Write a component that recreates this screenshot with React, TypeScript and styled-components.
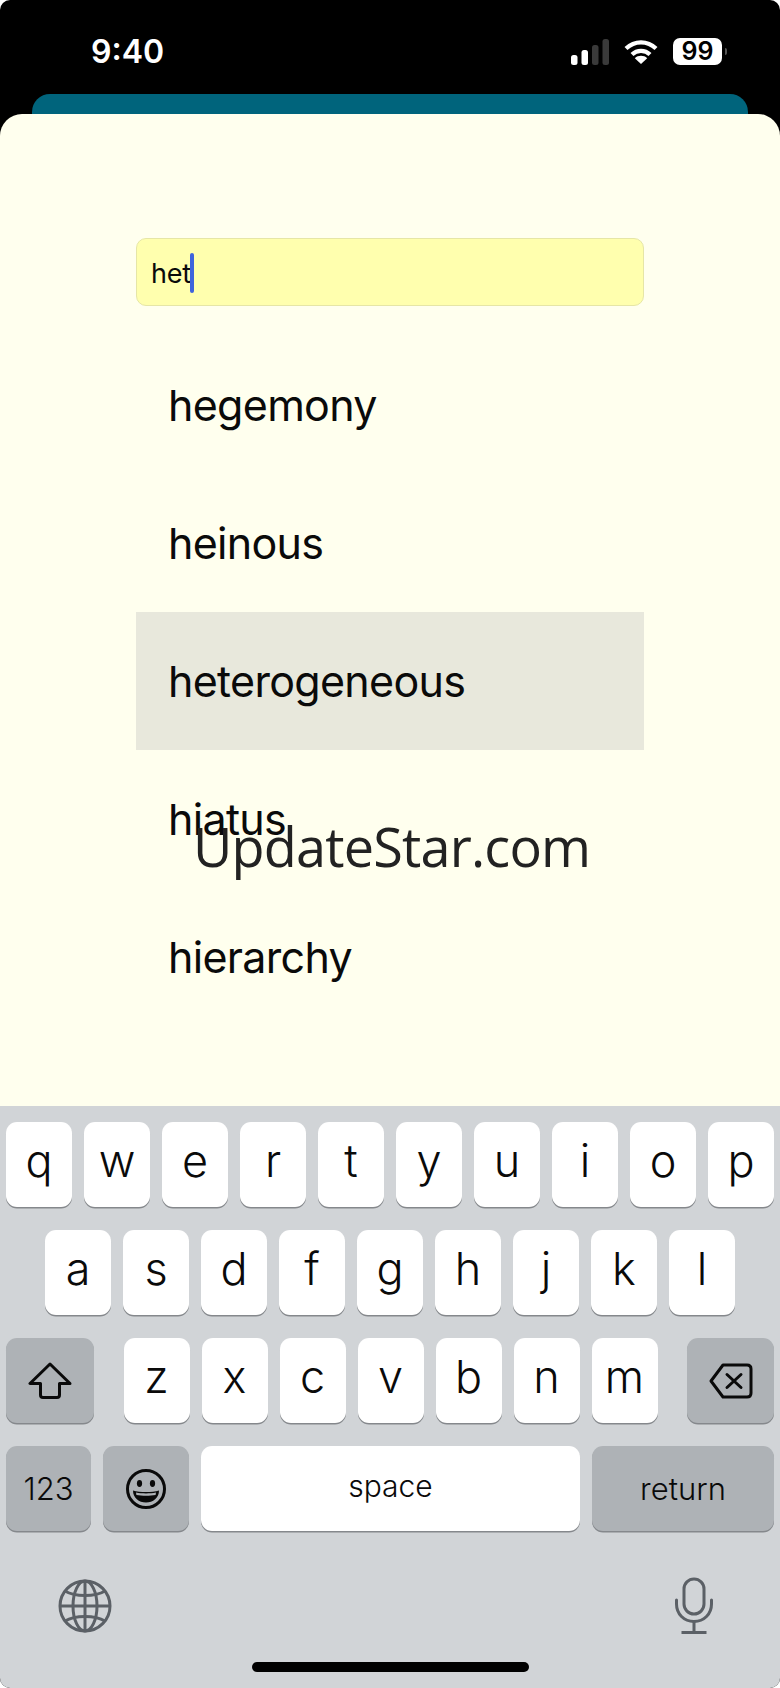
import React from 'react';
import styled, { createGlobalStyle } from 'styled-components';

const ROW_ONE = ['q', 'w', 'e', 'r', 't', 'y', 'u', 'i', 'o', 'p'];
const ROW_TWO = ['a', 's', 'd', 'f', 'g', 'h', 'j', 'k', 'l'];
const ROW_THREE = ['z', 'x', 'c', 'v', 'b', 'n', 'm'];
const WORDS = ['hegemony', 'heinous', 'heterogeneous', 'hiatus', 'hierarchy'];

const GlobalStyle = createGlobalStyle`
  html, body {
    margin: 0;
    padding: 0;
    background: #ffffff;
  }
  * {
    box-sizing: border-box;
  }
`;

const SignalIcon = () => (
  <svg width="38" height="26" viewBox="0 0 38 26">
    <rect x="0" y="16" width="6.5" height="10" rx="2.5" fill="#fff" />
    <rect x="10.5" y="11" width="6.5" height="15" rx="2.5" fill="#fff" />
    <rect x="21" y="6" width="6.5" height="20" rx="2.5" fill="#3a3a3a" />
    <rect x="31.5" y="0" width="6.5" height="26" rx="2.5" fill="#3a3a3a" />
  </svg>
);

const WifiIcon = () => (
  <svg width="34" height="25" viewBox="0 0 34 25" fill="none" stroke="#fff" strokeWidth="4.2">
    <path d="M2 9.5C10.5 1.2 23.5 1.2 32 9.5" />
    <path d="M8 15.5C13 10.6 21 10.6 26 15.5" />
    <path d="M17 25L10.8 19.2C14.2 16 19.8 16 23.2 19.2Z" fill="#fff" stroke="none" />
  </svg>
);

const ShiftIcon = () => (
  <svg width="44" height="38" viewBox="0 0 44 38" fill="none" stroke="#0a0a0a" strokeWidth="3" strokeLinejoin="round">
    <path d="M22 2L2 21.5H12.5V33C12.5 34.6 13.4 35.5 15 35.5H29C30.6 35.5 31.5 34.6 31.5 33V21.5H42Z" />
  </svg>
);

const DeleteIcon = () => (
  <svg width="44" height="36" viewBox="0 0 44 36" fill="none" stroke="#0a0a0a" strokeWidth="3" strokeLinejoin="round" strokeLinecap="round">
    <path d="M14 2H38C40.6 2 42 3.4 42 6V30C42 32.6 40.6 34 38 34H14L2 18Z" />
    <path d="M18 11.5L32 24.5M32 11.5L18 24.5" />
  </svg>
);

const EmojiIcon = () => (
  <svg width="40" height="40" viewBox="0 0 40 40" fill="none">
    <circle cx="20" cy="20" r="18.5" stroke="#0a0a0a" strokeWidth="3" />
    <ellipse cx="13.5" cy="14.5" rx="2.6" ry="3.4" fill="#0a0a0a" />
    <ellipse cx="26.5" cy="14.5" rx="2.6" ry="3.4" fill="#0a0a0a" />
    <path d="M7 21.5C14 23.5 26 23.5 33 21.5C33 29 27 33.5 20 33.5C13 33.5 7 29 7 21.5Z" fill="#0a0a0a" />
    <path d="M10 23.6C16 24.8 24 24.8 30 23.6L29.6 26C24 27 16 27 10.4 26Z" fill="#aeb2b6" />
  </svg>
);

const GlobeIcon = () => (
  <svg width="54" height="54" viewBox="0 0 54 54" fill="none" stroke="#5b6066" strokeWidth="3">
    <circle cx="27" cy="27" r="25" />
    <ellipse cx="27" cy="27" rx="12" ry="25" />
    <path d="M27 2V52M2 27H52" />
    <path d="M7 12C17 18 37 18 47 12M7 42C17 36 37 36 47 42" />
  </svg>
);

const MicIcon = () => (
  <svg width="38" height="58" viewBox="0 0 38 58" fill="none" stroke="#5b6066" strokeWidth="3" strokeLinecap="round">
    <rect x="9" y="2" width="20" height="35" rx="10" />
    <path d="M1.5 23V27C1.5 37 9 44.5 19 44.5C29 44.5 36.5 37 36.5 27V23" />
    <path d="M19 44.5V55.5M6.5 55.5H31.5" strokeLinecap="butt" />
  </svg>
);

const App: React.FC = () => {
  return (
    <S.Screen>
      <GlobalStyle />
      <S.StatusBar>
        <S.Time>9:40</S.Time>
        <S.StatusIcons>
          <SignalIcon />
          <WifiIcon />
          <S.Battery>
            <S.BatteryLevel>99</S.BatteryLevel>
            <S.BatteryNub />
          </S.Battery>
        </S.StatusIcons>
      </S.StatusBar>
      <S.PeekCard />
      <S.Sheet>
        <S.Form>
          <S.SearchField>
            <span>het</span>
            <S.Caret />
          </S.SearchField>
          <S.WordList>
            {WORDS.map((word) => (
              <S.WordRow key={word} $active={word === 'heterogeneous'}>
                {word}
              </S.WordRow>
            ))}
          </S.WordList>
        </S.Form>
        <S.Watermark>UpdateStar.com</S.Watermark>
      </S.Sheet>
      <S.Keyboard>
        <S.KeyRow>
          {ROW_ONE.map((letter) => (
            <S.Key key={letter}>{letter}</S.Key>
          ))}
        </S.KeyRow>
        <S.KeyRow $centered>
          {ROW_TWO.map((letter) => (
            <S.Key key={letter}>{letter}</S.Key>
          ))}
        </S.KeyRow>
        <S.KeyRow $spread>
          <S.SideKey $width={88}>
            <ShiftIcon />
          </S.SideKey>
          <S.LetterGroup>
            {ROW_THREE.map((letter) => (
              <S.Key key={letter}>{letter}</S.Key>
            ))}
          </S.LetterGroup>
          <S.SideKey $width={87}>
            <DeleteIcon />
          </S.SideKey>
        </S.KeyRow>
        <S.KeyRow>
          <S.SideKey $width={85}>
            <S.KeyLabel>123</S.KeyLabel>
          </S.SideKey>
          <S.SideKey $width={86}>
            <EmojiIcon />
          </S.SideKey>
          <S.SpaceKey>space</S.SpaceKey>
          <S.SideKey $width={182}>
            <S.KeyLabel>return</S.KeyLabel>
          </S.SideKey>
        </S.KeyRow>
        <S.KeyboardFooter>
          <GlobeIcon />
          <MicIcon />
        </S.KeyboardFooter>
        <S.HomeIndicator />
      </S.Keyboard>
    </S.Screen>
  );
};

export default App;

const S = {
  Screen: styled.div`
    display: flex;
    flex-direction: column;
    width: 780px;
    height: 1688px;
    overflow: hidden;
    background-color: #000;
    border-radius: 10px;
    font-family: Inter, 'Liberation Sans', sans-serif;
  `,

  StatusBar: styled.div`
    display: flex;
    align-items: flex-start;
    justify-content: space-between;
    height: 94px;
    padding: 33px 58px 0 91px;
    color: #fff;
  `,

  Time: styled.div`
    font-size: 32px;
    line-height: 38px;
    font-weight: 600;
  `,

  StatusIcons: styled.div`
    display: flex;
    align-items: center;
    gap: 15px;
    margin-top: 5px;
  `,

  Battery: styled.div`
    position: relative;
    display: flex;
    align-items: center;
    justify-content: center;
    width: 49px;
    height: 27px;
    background-color: #fff;
    border-radius: 7px;
  `,

  BatteryLevel: styled.span`
    color: #000;
    font-size: 25px;
    font-weight: 600;
    line-height: 27px;
  `,

  BatteryNub: styled.span`
    position: absolute;
    top: 10px;
    right: -5px;
    width: 2px;
    height: 7px;
    background-color: #555;
    border-radius: 0 2px 2px 0;
  `,

  PeekCard: styled.div`
    height: 20px;
    margin: 0 32px;
    background-color: #00647c;
    border-radius: 18px 18px 0 0;
  `,

  Sheet: styled.div`
    position: relative;
    flex: 1;
    padding: 124px 136px 0;
    background-color: #ffffee;
    border-radius: 22px 22px 0 0;
  `,

  Form: styled.div`
    display: flex;
    flex-direction: column;
    gap: 30px;
  `,

  SearchField: styled.div`
    display: flex;
    align-items: center;
    height: 68px;
    padding: 2px 0 0 14px;
    background-color: #ffffae;
    border: 1px solid #e6e6a6;
    border-radius: 10px;
    color: #0a0a0a;
    font-size: 27px;
    letter-spacing: -0.2px;
  `,

  Caret: styled.span`
    width: 4px;
    height: 40px;
    margin-left: -1px;
    background-color: #3f64dc;
    border-radius: 2px;
  `,

  WordList: styled.div`
    display: flex;
    flex-direction: column;
  `,

  WordRow: styled.div<{ $active?: boolean }>`
    display: flex;
    align-items: center;
    height: 138px;
    padding-left: 32px;
    background-color: ${({ $active }) => ($active ? '#e8e8dc' : 'transparent')};
    color: #0a0a0a;
    font-size: 43px;
    letter-spacing: -0.7px;
  `,

  Watermark: styled.div`
    position: absolute;
    top: 694px;
    left: 193px;
    color: #222;
    font-family: 'Open Sans', sans-serif;
    font-size: 54px;
    line-height: 76px;
    letter-spacing: -0.8px;
    white-space: nowrap;
  `,

  Keyboard: styled.div`
    position: relative;
    display: flex;
    flex-direction: column;
    gap: 23px;
    height: 582px;
    padding: 16px 6px 0;
    background-color: #d1d4d7;
  `,

  KeyRow: styled.div<{ $centered?: boolean; $spread?: boolean }>`
    display: flex;
    justify-content: ${({ $centered, $spread }) =>
      $centered ? 'center' : $spread ? 'space-between' : 'flex-start'};
    gap: 12px;
    height: 85px;
  `,

  LetterGroup: styled.div`
    display: flex;
    gap: 12px;
  `,

  Key: styled.div`
    display: flex;
    align-items: center;
    justify-content: center;
    width: 66px;
    height: 85px;
    padding-bottom: 9px;
    background-color: #fff;
    border-radius: 11px;
    box-shadow: 0 1.5px 0 #85888c;
    color: #0a0a0a;
    font-size: 45px;
    font-weight: 350;
  `,

  SideKey: styled.div<{ $width: number }>`
    display: flex;
    align-items: center;
    justify-content: center;
    width: ${({ $width }) => $width}px;
    height: 85px;
    background-color: #aeb2b6;
    border-radius: 11px;
    box-shadow: 0 1.5px 0 #85888c;
  `,

  KeyLabel: styled.span`
    color: #0a0a0a;
    font-size: 31px;
    font-weight: 350;
  `,

  SpaceKey: styled.div`
    display: flex;
    flex: 1;
    align-items: center;
    justify-content: center;
    height: 85px;
    padding-bottom: 6px;
    background-color: #fff;
    border-radius: 11px;
    box-shadow: 0 1.5px 0 #85888c;
    color: #0a0a0a;
    font-size: 30px;
    font-weight: 350;
  `,

  KeyboardFooter: styled.div`
    display: flex;
    align-items: center;
    justify-content: space-between;
    padding: 23px 61px 0 52px;
  `,

  HomeIndicator: styled.div`
    position: absolute;
    bottom: 16px;
    left: 252px;
    width: 277px;
    height: 10px;
    background-color: #000;
    border-radius: 5px;
  `,
};
